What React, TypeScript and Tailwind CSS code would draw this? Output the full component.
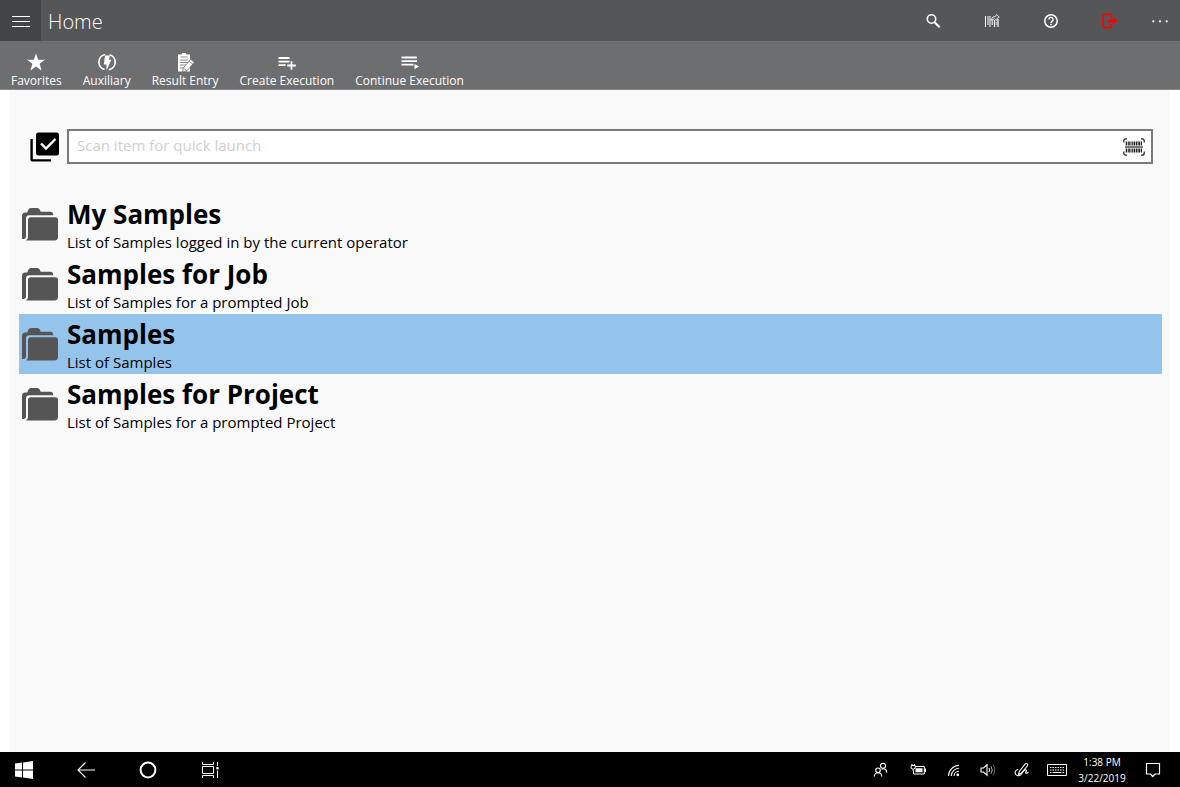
import React from 'react';

interface IconProps {
  className?: string;
}

interface Action {
  label: string;
  icon: React.ReactNode;
}

interface Folder {
  title: string;
  description: string;
  selected?: boolean;
}

const StarIcon = () => (
  <svg viewBox="0 0 20 20" className="size-5" fill="currentColor">
    <path d="M10 .5l2.200 6.300H19l-5.400 4 2 6.700-5.600-4-5.600 4 2-6.700-5.400-4h6.800z" />
  </svg>
);

const AuxiliaryIcon = () => (
  <svg viewBox="0 0 20 20" className="size-5" fill="none" stroke="currentColor">
    <path d="M8.200 1.500a7.700 7.700 0 0 0-.6 15M12.600 1.700a7.700 7.700 0 0 1-.8 15" strokeWidth="1.700" />
    <path d="M8 2.500h5l-1 4.300h2.300L9.500 17.500v-6H6.800z" fill="currentColor" stroke="none" />
  </svg>
);

const ResultIcon = () => (
  <svg viewBox="0 0 20 20" className="size-5">
    <path d="M3 1.500h3.600a2.500 2.500 0 0 1 4.800 0H15v17H3z" fill="currentColor" />
    <path d="M5.500 4h7M5 7h8M5 9.500h8M5 12h6M5 15h4" stroke="#6d6e70" strokeWidth="0.800" />
    <path d="M7.500 19l.9-4.200 7.400-8.500 3.600 3-7.500 8.500z" fill="currentColor" stroke="#6d6e70" strokeWidth="0.800" />
    <path d="M14.300 8.300l3.400 2.900M8.600 15.100l3 2.500" stroke="#6d6e70" strokeWidth="0.800" />
  </svg>
);

const CreateIcon = () => (
  <svg viewBox="0 0 20 20" className="size-5" stroke="currentColor" strokeWidth="1.800">
    <path d="M1.500 5h11M1.500 8.600h11M1.500 12.200h7M14.500 8.200v8.600M10.200 12.500h8.600" />
  </svg>
);

const ContinueIcon = () => (
  <svg viewBox="0 0 20 20" className="size-5" stroke="currentColor" strokeWidth="1.800">
    <path d="M1.500 4.500h15.500M1.500 8.100h15.500M1.500 11.700h12" />
    <path d="M14.500 11l4.500 2.600-4.500 2.600z" fill="currentColor" stroke="none" />
  </svg>
);

const MenuIcon = () => (
  <svg viewBox="0 0 18 15" className="h-[15px] w-[18px]" stroke="currentColor" strokeWidth="1.200">
    <path d="M0 3.500h18M0 8.500h18M0 13.500h18" />
  </svg>
);

const SearchIcon = () => (
  <svg viewBox="0 0 16 16" className="size-4" fill="none" stroke="currentColor" strokeWidth="1.600">
    <circle cx="6.500" cy="6" r="4.200" />
    <path d="M9.600 9.200l5 5" strokeWidth="2.100" />
  </svg>
);

const BarcodeEditIcon = () => (
  <svg viewBox="0 0 16 16" className="size-4" fill="none" stroke="currentColor">
    <path d="M1.500 3v11M4 3v9M6 3v11M8.200 7v5" strokeWidth="1" />
    <path d="M10.500 7v7M14 6v8" strokeWidth="1.200" />
    <path d="M12.300 9v3" strokeWidth="0.700" />
    <path d="M6.800 7.200l2-3.200 2.600-.4 1-2.200 2.800 2.800-2 1.200-.6 2.400-2.200-2z" strokeWidth="0.800" />
  </svg>
);

const HelpIcon = () => (
  <svg viewBox="0 0 16 16" className="size-4" fill="none" stroke="currentColor">
    <circle cx="8" cy="8" r="6.200" strokeWidth="1.500" />
    <path d="M5.900 6.400a2.100 2.100 0 1 1 3.400 1.700C8.400 8.700 8 9 8 9.900" strokeWidth="1.400" />
    <path d="M8 10.800v1.500" strokeWidth="1.500" />
  </svg>
);

const ExitIcon = () => (
  <svg viewBox="0 0 16 16" className="size-4" fill="none" stroke="#ff0000">
    <path d="M9.300 4.800V2.600q0-1.200-1.200-1.200H2.300q-1.200 0-1.200 1.200v10.800q0 1.200 1.200 1.200h5.800q1.200 0 1.200-1.200v-2.200" strokeWidth="1.800" />
    <path d="M6 6.500h4.700V3.900L15.500 8l-4.800 4.100V9.500H6z" fill="#ff0000" stroke="none" />
  </svg>
);

const MoreIcon = () => (
  <svg viewBox="0 0 16 4" className="h-1 w-4" fill="currentColor">
    <circle cx="1.300" cy="2.300" r="1.100" />
    <circle cx="8" cy="2.300" r="1.100" />
    <circle cx="14.700" cy="2.300" r="1.100" />
  </svg>
);

const ChecklistIcon = () => (
  <svg viewBox="0 0 30 30" className="size-[30px]">
    <path d="M1.600 7v20q0 1.400 1.400 1.400h18" fill="none" stroke="#000" strokeWidth="2.400" />
    <rect x="6" y="0.500" width="23" height="23" rx="2.500" fill="#000" />
    <path d="M11 11.500l5 5 9.500-9.500" fill="none" stroke="#fff" strokeWidth="2.400" />
  </svg>
);

const ScanIcon = () => (
  <svg viewBox="0 0 22 18" className="h-[18px] w-[22px]" fill="none" stroke="#222">
    <path d="M.8 4.500V2.800Q.8.8 2.800.8H4M18 .8h1.200q2 0 2 2v1.700M21.200 13.500v1.700q0 2-2 2H18M4 17.200H2.800q-2 0-2-2v-1.700" strokeWidth="1.200" />
    <path d="M3.500 3.500v4M6 3.500v4M11.500 3.500v4M16.500 3.500v4M3.500 10.500v4M6 10.500v4M11.500 10.500v4M16.500 10.500v4" strokeWidth="1.600" />
    <path d="M8 3.500v4M9.700 3.500v4M13.500 3.500v4M15 3.500v4M18.500 3.500v4M8 10.500v4M9.700 10.500v4M13.500 10.500v4M15 10.500v4M18.500 10.500v4" strokeWidth="1" />
    <path d="M2 9h18" strokeWidth="1.200" />
  </svg>
);

const FolderIcon = () => (
  <svg viewBox="0 0 36 33" className="h-[33px] w-9 shrink-0" fill="#555">
    <path d="M0 31V8q0-3.500 3.500-3.500h1.700L6.500 1.600Q7.200 0 9 0h6.200Q17 0 17.700 1.600l1 2.200h9.500q3 0 3.200 3.400H7.500Q4 7.200 4 10.500V28q0 3-2.500 3z" />
    <path d="M9 9.200h24.200q2.800 0 2.800 2.800v17q0 3.400-3.400 3.400H4q2-.8 2-3.600V12q0-2.800 3-2.800z" />
  </svg>
);

const WindowsIcon = () => (
  <svg viewBox="0 0 18 18" className="size-[18px]" fill="currentColor">
    <path d="M0 2.600l7-1v7H0zM8 1.500L18 0v8.600H8zM0 9.400h7v7l-7-1zM8 9.400h10V18L8 16.500z" />
  </svg>
);

const BackIcon = () => (
  <svg viewBox="0 0 18 18" className="size-[18px]" fill="none" stroke="currentColor" strokeWidth="1.100">
    <path d="M18 9H1M8.500 1.500L1 9l7.500 7.500" />
  </svg>
);

const CortanaIcon = () => (
  <svg viewBox="0 0 18 18" className="size-[18px]" fill="none" stroke="currentColor" strokeWidth="2">
    <circle cx="9" cy="9" r="7.400" />
  </svg>
);

const TaskViewIcon = () => (
  <svg viewBox="0 0 18 18" className="size-[18px]" fill="none" stroke="currentColor">
    <path d="M1.500 1v2.500h11V1M1.500 17v-2.500h11V17M1.500 5.500h11v7h-11zM16.500 1v4M16.500 9.500V17" />
    <path d="M15.300 6h2.400v2.400h-2.400z" fill="currentColor" stroke="none" />
  </svg>
);

const PeopleIcon = () => (
  <svg viewBox="0 0 20 16" className="h-4 w-5" fill="none" stroke="currentColor" strokeWidth="1.100">
    <circle cx="7" cy="8.300" r="2.300" />
    <path d="M3.300 14.500c0-5 7.400-5 7.400 0" />
    <circle cx="12" cy="3.800" r="2.500" />
    <path d="M10.500 7.300c3-1.600 5.300.2 5.300 3.200" />
  </svg>
);

const BatteryIcon = () => (
  <svg viewBox="0 0 22 16" className="h-4 w-[22px]" fill="none" stroke="currentColor">
    <path d="M8.500 4.500h8.800v7.500H6.500V9" />
    <path d="M8.500 6.300h7v4h-7zM17.500 6.500H19V10h-1.500z" fill="currentColor" stroke="none" />
    <path d="M4.200 3.500h4v2.800q-2 2-4 0zM5 2v1.500M7.500 2v1.500M6.200 7v2" />
  </svg>
);

const WifiIcon = () => (
  <svg viewBox="0 0 18 16" className="h-4 w-[18px]" fill="none" stroke="currentColor" strokeWidth="1.100">
    <path d="M3.500 14A11 11 0 0 1 14 3.200M6.200 14A8 8 0 0 1 14 6.300M9 14a5 5 0 0 1 5-4.800" />
    <circle cx="12.800" cy="12.800" r="1.400" fill="currentColor" stroke="none" />
  </svg>
);

const VolumeIcon = () => (
  <svg viewBox="0 0 18 16" className="h-4 w-[18px]" fill="none" stroke="currentColor">
    <path d="M2 6h2.500L8 2.800v10.400L4.500 10H2z" strokeWidth="1.100" />
    <path d="M10 6q1.300 2 0 4" />
    <path d="M12 4.300q2.400 3.700 0 7.400" opacity="0.700" />
    <path d="M14 2.600q3.400 5.400 0 10.800" opacity="0.400" />
  </svg>
);

const PenIcon = () => (
  <svg viewBox="0 0 18 16" className="h-4 w-[18px]" fill="none" stroke="currentColor" strokeWidth="1.100">
    <path d="M5.500 12.500l.8-3L12 2.200q1.300-1.200 2.300-.3t0 2.100L8.200 11.300z" />
    <path d="M5.300 7.500c-3 .5-4 3-2.500 5s4.500 1.500 6-1 3.700-4.600 4.500-3.500-1.400 2.200-.5 3 2-.2 2.700-1.200" />
  </svg>
);

const KeyboardIcon = () => (
  <svg viewBox="0 0 20 16" className="h-4 w-5" fill="none" stroke="currentColor">
    <path d="M.5 2.500h19v11H.5z" />
    <path d="M3 5.500h14M3 8h14" strokeDasharray="1.500 1" />
    <path d="M3 10.500h1.500M5.500 10.500h9M15.500 10.500H17" />
  </svg>
);

const NotificationIcon = ({ className }: IconProps) => (
  <svg viewBox="0 0 16 16" className={className} fill="none" stroke="currentColor" strokeWidth="1.200">
    <path d="M1.500 1.500h13v10.500H10l-2.300 2.500L5.500 12h-4z" />
  </svg>
);

const actions: Action[] = [
  { label: 'Favorites', icon: <StarIcon /> },
  { label: 'Auxiliary', icon: <AuxiliaryIcon /> },
  { label: 'Result Entry', icon: <ResultIcon /> },
  { label: 'Create Execution', icon: <CreateIcon /> },
  { label: 'Continue Execution', icon: <ContinueIcon /> },
];

const headerActions: Action[] = [
  { label: 'Search', icon: <SearchIcon /> },
  { label: 'Edit barcode', icon: <BarcodeEditIcon /> },
  { label: 'Help', icon: <HelpIcon /> },
  { label: 'Log out', icon: <ExitIcon /> },
];

const folders: Folder[] = [
  { title: 'My Samples', description: 'List of Samples logged in by the current operator' },
  { title: 'Samples for Job', description: 'List of Samples for a prompted Job' },
  { title: 'Samples', description: 'List of Samples', selected: true },
  { title: 'Samples for Project', description: 'List of Samples for a prompted Project' },
];

const navButtons: Action[] = [
  { label: 'Start', icon: <WindowsIcon /> },
  { label: 'Back', icon: <BackIcon /> },
  { label: 'Cortana', icon: <CortanaIcon /> },
  { label: 'Task view', icon: <TaskViewIcon /> },
];

const trayButtons: Action[] = [
  { label: 'People', icon: <PeopleIcon /> },
  { label: 'Battery', icon: <BatteryIcon /> },
  { label: 'Network', icon: <WifiIcon /> },
  { label: 'Volume', icon: <VolumeIcon /> },
  { label: 'Pen', icon: <PenIcon /> },
  { label: 'Keyboard', icon: <KeyboardIcon /> },
];

const Header = () => (
  <header className="text-white">
    <div className="flex h-[41px] items-center bg-[#555658]">
      <button aria-label="Menu" className="flex h-full w-[41px] items-center justify-center bg-[#434445]">
        <MenuIcon />
      </button>
      <h1 className="ml-[7px] flex-1 pt-[2px] text-xl font-light">Home</h1>
      {headerActions.map(({ label, icon }) => (
        <button key={label} aria-label={label} className="flex h-full w-[59px] items-center justify-center">
          {icon}
        </button>
      ))}
      <button aria-label="More" className="flex h-full w-[41px] items-center justify-center">
        <MoreIcon />
      </button>
    </div>
    <nav className="flex h-[49px] gap-px border-b border-[#8a8a8c] bg-[#6d6e70] pl-px">
      {actions.map(({ label, icon }) => (
        <button
          key={label}
          className="flex flex-col items-center justify-end px-[10px] text-xs leading-4 whitespace-nowrap"
        >
          {icon}
          {label}
        </button>
      ))}
    </nav>
  </header>
);

const FolderRow = ({ title, description, selected }: Folder) => (
  <li>
    <button
      className={`flex h-[60px] w-full items-center gap-[9px] pl-[3px] text-left ${selected ? 'bg-[#94c4eb]' : ''}`}
    >
      <FolderIcon />
      <span className="flex flex-col">
        <span className="text-[26px] leading-9 font-bold">{title}</span>
        <span className="text-[15px] leading-5">{description}</span>
      </span>
    </button>
  </li>
);

const Taskbar = () => (
  <footer className="flex h-[35px] items-center justify-between bg-black text-white">
    <div className="flex h-full gap-[14px]">
      {navButtons.map(({ label, icon }) => (
        <button key={label} aria-label={label} className="flex w-12 items-center justify-center">
          {icon}
        </button>
      ))}
    </div>
    <div className="flex items-center gap-4 pr-[19px]">
      {trayButtons.map(({ label, icon }) => (
        <button key={label} aria-label={label}>
          {icon}
        </button>
      ))}
      <div className="-ml-2 w-[54px] text-center text-[10px] leading-4">
        <p>1:38 PM</p>
        <p>3/22/2019</p>
      </div>
      <button aria-label="Notifications">
        <NotificationIcon className="size-4" />
      </button>
    </div>
  </footer>
);

const App: React.FC = () => (
  <div className="flex min-h-screen flex-col bg-white font-['Segoe_UI','Open_Sans',sans-serif] text-black">
    <Header />
    <main className="mx-[10px] flex-1 bg-[#f9f9f9] pt-[39px]">
      <div className="flex items-center gap-[7px] pr-[17px] pl-5">
        <ChecklistIcon />
        <div className="flex h-[35px] flex-1 items-center border-2 border-[#7a7a7a] bg-white pr-[6px] pl-2">
          <input
            type="text"
            aria-label="Scan item"
            placeholder="Scan item for quick launch"
            className="h-full flex-1 pb-[3px] text-[15px] outline-none placeholder:text-[#cfcfcf]"
          />
          <button aria-label="Scan barcode">
            <ScanIcon />
          </button>
        </div>
      </div>
      <ul className="mt-[30px] mr-2 ml-[9px]">
        {folders.map((folder) => (
          <FolderRow key={folder.title} {...folder} />
        ))}
      </ul>
    </main>
    <Taskbar />
  </div>
);

export default App;
